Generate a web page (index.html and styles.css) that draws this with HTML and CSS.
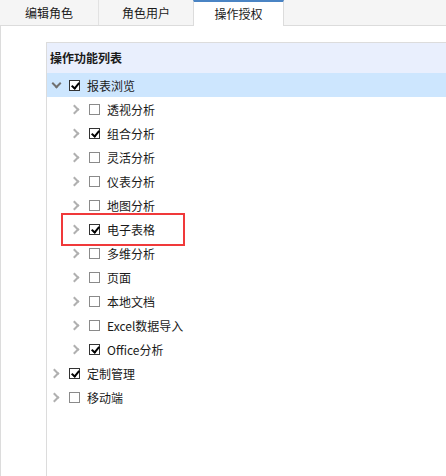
FILE: index.html
```html
<!DOCTYPE html>
<html lang="zh-CN">
<head>
    <meta charset="UTF-8">
    <title>操作授权</title>
    <link rel="stylesheet" href="styles.css">
</head>
<body>
    <div class="tabs">
        <div class="tab tab-first">编辑角色</div>
        <div class="tab tab-second">角色用户</div>
        <div class="tab tab-active">操作授权</div>
        <div class="tab-rest"></div>
    </div>
    <div class="content">
        <div class="panel">
            <div class="panel-header">操作功能列表</div>
            <ul class="tree">
                <li class="row selected lvl0"><span class="arrow down"></span><span class="box checked"></span><span class="label">报表浏览</span></li>
                <li class="row lvl1"><span class="arrow"></span><span class="box"></span><span class="label">透视分析</span></li>
                <li class="row lvl1"><span class="arrow"></span><span class="box checked"></span><span class="label">组合分析</span></li>
                <li class="row lvl1"><span class="arrow"></span><span class="box"></span><span class="label">灵活分析</span></li>
                <li class="row lvl1"><span class="arrow"></span><span class="box"></span><span class="label">仪表分析</span></li>
                <li class="row lvl1"><span class="arrow"></span><span class="box"></span><span class="label">地图分析</span></li>
                <li class="row lvl1"><span class="arrow"></span><span class="box checked"></span><span class="label">电子表格</span><span class="mark"></span></li>
                <li class="row lvl1"><span class="arrow"></span><span class="box"></span><span class="label">多维分析</span></li>
                <li class="row lvl1"><span class="arrow"></span><span class="box"></span><span class="label">页面</span></li>
                <li class="row lvl1"><span class="arrow"></span><span class="box"></span><span class="label">本地文档</span></li>
                <li class="row lvl1"><span class="arrow"></span><span class="box"></span><span class="label">Excel数据导入</span></li>
                <li class="row lvl1"><span class="arrow"></span><span class="box checked"></span><span class="label">Office分析</span></li>
                <li class="row lvl0"><span class="arrow"></span><span class="box checked"></span><span class="label">定制管理</span></li>
                <li class="row lvl0"><span class="arrow"></span><span class="box"></span><span class="label">移动端</span></li>
            </ul>
        </div>
    </div>
</body>
</html>
```

FILE: styles.css
```css
html, body {
    margin: 0;
    padding: 0;
    height: 100%;
    overflow: hidden;
}

body {
    font-family: "Noto Sans CJK SC", "Noto Sans", sans-serif;
    font-size: 12px;
    color: #1a1a1a;
    background-color: #fff;
}

.tabs {
    display: flex;
    height: 25px;
    background-color: #f5f5f5;
    border-bottom: 1px solid #dcdcdc;
}

.tab {
    display: flex;
    align-items: center;
    justify-content: center;
    height: 25px;
    box-sizing: border-box;
}

.tab-first {
    width: 99px;
    border-right: 1px solid #e2e2e2;
}

.tab-second {
    width: 94px;
}

.tab-active {
    width: 91px;
    height: 26px;
    background-color: #fff;
    border-top: 2px solid #4a84c4;
    border-left: 1px solid #dcdcdc;
    border-right: 1px solid #dcdcdc;
    padding-bottom: 1px;
}

.tab-rest {
    flex: 1;
}

.content {
    height: calc(100% - 26px);
    border-left: 1px solid #dcdcdc;
    padding: 16px 0 0 45px;
    box-sizing: border-box;
}

.panel {
    height: 100%;
    border-left: 1px solid #dcdcdc;
    border-top: 1px solid #dcdcdc;
}

.panel-header {
    height: 30px;
    line-height: 30px;
    padding-left: 3px;
    font-weight: bold;
    background-color: #e9effd;
}

.tree {
    list-style: none;
    margin: 0;
    padding: 0;
}

.row {
    position: relative;
    display: flex;
    align-items: center;
    height: 24px;
}

.row.selected {
    background-color: #cde6fe;
}

.lvl0 {
    padding-left: 4px;
}

.lvl1 {
    padding-left: 24px;
}

.arrow {
    width: 10px;
    height: 10px;
    position: relative;
    margin-right: 8px;
}

.arrow::before {
    content: "";
    position: absolute;
    left: 0;
    top: 2px;
    width: 5px;
    height: 5px;
    border-right: 2px solid #b0b0b0;
    border-bottom: 2px solid #b0b0b0;
    transform: rotate(-45deg);
}

.arrow.down::before {
    left: 2px;
    top: 0;
    border-color: #707070;
    transform: rotate(45deg);
}

.box {
    width: 11px;
    height: 11px;
    box-sizing: border-box;
    border: 1px solid #8a8a8a;
    background-color: #fff;
    position: relative;
    margin-right: 7px;
}

.box.checked {
    border-color: #333;
}

.box.checked::after {
    content: "";
    position: absolute;
    left: 3px;
    top: 0;
    width: 3px;
    height: 6px;
    border-right: 2px solid #000;
    border-bottom: 2px solid #000;
    transform: rotate(40deg);
}

.label {
    white-space: nowrap;
}

.mark {
    position: absolute;
    left: 14px;
    top: -4px;
    width: 124px;
    height: 33px;
    box-sizing: border-box;
    border: 2px solid #f0393a;
}
```
